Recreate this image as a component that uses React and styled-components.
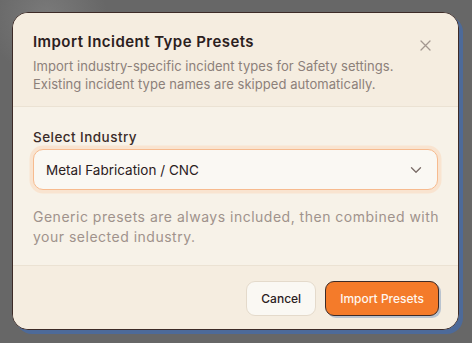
import React, { useState } from 'react'
import styled, { createGlobalStyle } from 'styled-components'

const Global = createGlobalStyle`
  html, body { margin: 0; padding: 0; }
  body { font-family: Inter, "Noto Sans", sans-serif; background: #676767; }
`

const Overlay = styled.div`
  width: 472px;
  height: 343px;
  box-sizing: border-box;
  padding: 12px 13px 0 12px;
  background: radial-gradient(circle at 10% 5%, #7a7a7a 0, #676767 60px), #676767;
`

const Dialog = styled.div`
  width: 447px;
  height: 318px;
  box-sizing: border-box;
  border: 1.5px solid #3d2b27;
  border-radius: 16px;
  background: #f7f2e8;
  box-shadow: 4px 4px 0 #4d6a99;
  overflow: hidden;
  display: flex;
  flex-direction: column;
`

const Header = styled.div`
  position: relative;
  background: #f5ede0;
  padding: 19px 22px 13px 20px;
  border-bottom: 1.5px solid #ebe2d3;
`

const Title = styled.h2`
  margin: 0 0 5px;
  font-size: 15px;
  line-height: 20px;
  font-weight: 600;
  letter-spacing: 0.45px;
  color: #2b201d;
`

const Sub = styled.p`
  margin: 0;
  font-size: 13px;
  line-height: 18px;
  letter-spacing: 0.05px;
  color: #8c807a;
`

const Close = styled.button`
  position: absolute;
  top: 25px;
  right: 26px;
  width: 14px;
  height: 14px;
  padding: 0;
  border: 0;
  background: transparent;
  display: flex;
  align-items: center;
  justify-content: center;
`

const Body = styled.div`
  flex: 1;
  padding: 21px 20px 0 20px;
  display: flex;
  flex-direction: column;
`

const Label = styled.label`
  font-size: 13.5px;
  line-height: 18px;
  font-weight: 500;
  letter-spacing: 0.45px;
  color: #3a2c28;
  margin-bottom: 3px;
`

const Select = styled.div`
  height: 41px;
  box-sizing: border-box;
  border: 1.5px solid #f7bb8f;
  border-radius: 10px;
  background: #faf8f3;
  box-shadow: 0 0 0 3.5px #f9e4d0;
  display: flex;
  align-items: center;
  justify-content: space-between;
  padding: 0 12px 0 12px;
  font-size: 13.5px;
  color: #2b201d;
`

const Help = styled.p`
  margin: 17px 0 0;
  font-size: 14px;
  line-height: 20px;
  letter-spacing: 0.5px;
  white-space: nowrap;
  color: #a0928c;
`

const Footer = styled.div`
  background: #f5ede0;
  border-top: 1.5px solid #ebe2d3;
  padding: 15px 19px 13px;
  display: flex;
  justify-content: flex-end;
  gap: 9px;
`

const Button = styled.button`
  height: 35px;
  box-sizing: border-box;
  border-radius: 9px;
  font-family: inherit;
  font-size: 12px;
  font-weight: 500;
  padding: 0 14px;
  border: 1px solid ${p => (p.primary ? '#3d2b27' : '#e4dacb')};
  background: ${p => (p.primary ? '#f47b2a' : '#faf8f3')};
  color: ${p => (p.primary ? '#fff6ee' : '#2b201d')};
  box-shadow: ${p => (p.primary ? '2px 2px 0 #b9c3cf' : 'none')};
`

export default function App() {
  const [industry] = useState('Metal Fabrication / CNC')
  return (
    <>
      <Global />
      <Overlay>
        <Dialog>
          <Header>
            <Title>Import Incident Type Presets</Title>
            <Sub>
              Import industry-specific incident types for Safety settings.
              <br />
              Existing incident type names are skipped automatically.
            </Sub>
            <Close aria-label="Close">
              <svg width="11" height="11" viewBox="0 0 11 11" fill="none" stroke="#a39790" strokeWidth="1.3" strokeLinecap="round">
                <path d="M1 1l9 9M10 1l-9 9" />
              </svg>
            </Close>
          </Header>
          <Body>
            <Label>Select Industry</Label>
            <Select>
              <span>{industry}</span>
              <svg width="18" height="18" viewBox="0 0 24 24" fill="none" stroke="#7d6f6a" strokeWidth="1.8" strokeLinecap="round" strokeLinejoin="round">
                <path d="M6 9l6 6 6-6" />
              </svg>
            </Select>
            <Help>
              Generic presets are always included, then combined with
              <br />
              your selected industry.
            </Help>
          </Body>
          <Footer>
            <Button>Cancel</Button>
            <Button primary>Import Presets</Button>
          </Footer>
        </Dialog>
      </Overlay>
    </>
  )
}
